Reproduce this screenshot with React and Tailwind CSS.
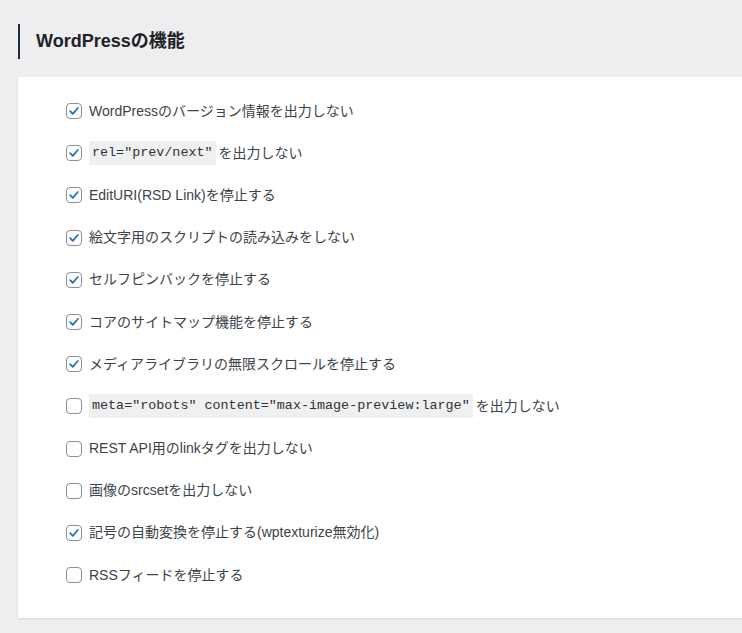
import React from 'react';

const items = [
  { checked: true, label: 'WordPressのバージョン情報を出力しない' },
  { checked: true, code: 'rel="prev/next"', label: 'を出力しない' },
  { checked: true, label: 'EditURI(RSD Link)を停止する' },
  { checked: true, label: '絵文字用のスクリプトの読み込みをしない' },
  { checked: true, label: 'セルフピンバックを停止する' },
  { checked: true, label: 'コアのサイトマップ機能を停止する' },
  { checked: true, label: 'メディアライブラリの無限スクロールを停止する' },
  { checked: false, code: 'meta="robots" content="max-image-preview:large"', label: 'を出力しない' },
  { checked: false, label: 'REST API用のlinkタグを出力しない' },
  { checked: false, label: '画像のsrcsetを出力しない' },
  { checked: true, label: '記号の自動変換を停止する(wptexturize無効化)' },
  { checked: false, label: 'RSSフィードを停止する' },
];

function Checkbox({ checked }) {
  return (
    <span className="w-4 h-4 shrink-0 rounded-[4px] border border-[#8c8f94] bg-white flex items-center justify-center">
      {checked && (
        <svg viewBox="0 0 16 16" className="w-4 h-4">
          <path d="M3.6 8.2 L6.6 11.2 L12.4 4.6" fill="none" stroke="#2271b1" strokeWidth="2" strokeLinecap="round" strokeLinejoin="round" />
        </svg>
      )}
    </span>
  );
}

export default function App() {
  return (
    <div
      className="min-h-[633px] bg-[#eeeef0] pt-6 pl-[18px] text-[#3c434a]"
      style={{ fontFamily: '"Liberation Sans", "Noto Sans CJK JP", sans-serif' }}
    >
      <h2 className="border-l-2 border-[#1d2d3f] h-[35px] pl-4 flex items-center text-[18px] font-bold text-[#1d2327]">
        WordPressの機能
      </h2>
      <div className="mt-[18px] bg-white shadow-[0_1px_2px_rgba(0,0,0,0.1)] pt-[13px] pb-[22px] pl-12">
        {items.map((it, i) => (
          <label key={i} className="h-[42.2px] flex items-center gap-[7px] text-[14px]">
            <Checkbox checked={it.checked} />
            <span className="flex items-center">
              {it.code && (
                <code
                  className="bg-[#f0f0f1] px-[3px] py-[2px] mr-[3px] text-[13.4px] text-[#2c3338]"
                  style={{ fontFamily: '"Liberation Mono", monospace' }}
                >
                  {it.code}
                </code>
              )}
              {it.label}
            </span>
          </label>
        ))}
      </div>
    </div>
  );
}
